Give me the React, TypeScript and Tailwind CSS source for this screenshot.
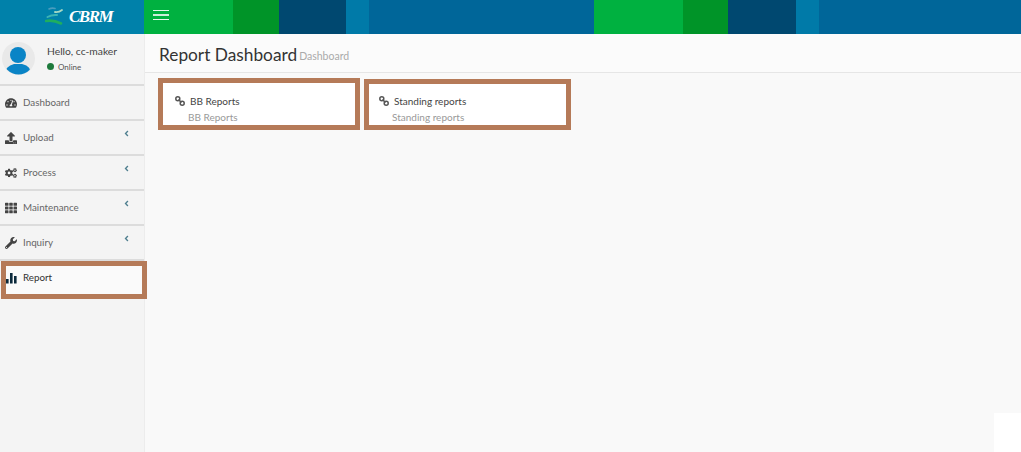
import { FaAngleLeft, FaCogs, FaTachometerAlt, FaTh, FaUpload, FaWrench } from "react-icons/fa";
import type { ReactNode } from "react";

const stripes = [
  "w-[89px] bg-[#00b140]",
  "w-[46px] bg-[#009428]",
  "w-[67px] bg-[#004870]",
  "w-[23px] bg-[#007aa8]",
  "w-[225px] bg-[#006699]",
  "w-[89px] bg-[#00b140]",
  "w-[45px] bg-[#009428]",
  "w-[68px] bg-[#004870]",
  "w-[23px] bg-[#007aa8]",
  "flex-1 bg-[#006699]",
];

const menu: { label: string; icon: ReactNode; arrow?: boolean }[] = [
  { label: "Dashboard", icon: <FaTachometerAlt /> },
  { label: "Upload", icon: <FaUpload />, arrow: true },
  { label: "Process", icon: <FaCogs />, arrow: true },
  { label: "Maintenance", icon: <FaTh />, arrow: true },
  { label: "Inquiry", icon: <FaWrench />, arrow: true },
];

function Logo() {
  return (
    <svg width="20" height="20" viewBox="0 0 20 20" fill="none" strokeLinecap="round" className="mr-[4px]">
      <path d="M4 2 Q7 0.5 10 1.5" stroke="#4a9dbf" strokeWidth="1.6" />
      <path d="M10 5 Q14 5.5 17 3" stroke="#a6d9c4" strokeWidth="1.8" />
      <path d="M2.5 10 Q7 7.5 12 8" stroke="#3cb3b5" strokeWidth="2" />
      <path d="M1 14 Q8 12.5 16 16.5" stroke="#1fae5e" strokeWidth="2.6" />
    </svg>
  );
}

function LinkIcon() {
  return (
    <svg width="10" height="10" viewBox="0 0 10 10" fill="none" stroke="#555" strokeWidth="1.5" className="shrink-0">
      <circle cx="2.8" cy="2.8" r="2" />
      <circle cx="7.2" cy="7.2" r="2" />
      <path d="M3.5 3.5 L6.5 6.5" />
    </svg>
  );
}

function ReportCard({ title, inset }: { title: string; inset: string }) {
  return (
    <div className={`relative w-full h-full bg-white ${inset}`}>
      <div className="flex items-center gap-[5px] text-[10px] leading-[14px] text-[#444]">
        <LinkIcon />
        {title}
      </div>
      <div className="pl-[13px] pt-[2px] text-[10px] leading-[15px] text-[#999]">{title}</div>
      <div className="absolute -inset-[5px] border-[5px] border-[#b57a58]" />
    </div>
  );
}

export default function App() {
  return (
    <div className="h-[452px] w-[1021px] overflow-hidden flex flex-col bg-white font-['Lato',sans-serif]">
      <header className="h-[34px] flex shrink-0">
        <div className="w-[144px] bg-[#0081aa] flex items-center pl-[45px]">
          <Logo />
          <span className="font-['Liberation_Serif',serif] italic font-bold text-[17px] text-white tracking-[-1.5px]">CBRM</span>
        </div>
        <div className="flex flex-1 relative">
          {stripes.map((s) => (
            <div key={s} className={s} />
          ))}
          <div className="absolute left-[9px] top-[10px] w-[16px] flex flex-col gap-[3px]">
            <div className="h-[1px] bg-white/90" />
            <div className="h-[2px] bg-white/80" />
            <div className="h-[1px] bg-white/90" />
          </div>
        </div>
      </header>

      <div className="flex flex-1 min-h-0">
        <aside className="w-[145px] shrink-0 bg-[#f4f4f4] border-r border-[#ececec]">
          <div className="h-[52px] flex items-center pl-[2px] border-b-2 border-[#dcdcdc]">
            <svg width="33" height="33" viewBox="0 0 33 33" className="mb-[2px]">
              <defs>
                <clipPath id="avatar-clip">
                  <circle cx="16.5" cy="16.5" r="16" />
                </clipPath>
              </defs>
              <circle cx="16.5" cy="16.5" r="16.5" fill="#e9e9e9" />
              <g clipPath="url(#avatar-clip)" fill="#0a84c6">
                <circle cx="16" cy="13" r="8" />
                <path d="M4 29 C4 25 9 23 12 22 L20 22 C24 23 28 25 28 29 C22 35 10 35 4 29 Z" />
              </g>
            </svg>
            <div className="ml-[12px] -mt-[3px]">
              <div className="text-[10.3px] leading-[14px] text-[#444]">Hello, cc-maker</div>
              <div className="mt-[4px] flex items-center gap-[4px] text-[8px] leading-[10px] text-[#555]">
                <span className="w-[7px] h-[7px] rounded-full bg-[#1e7a3c]" />
                Online
              </div>
            </div>
          </div>
          {menu.map((m) => (
            <div key={m.label} className="h-[35px] flex items-center pl-[5px] pr-[13px] border-b-2 border-[#dcdcdc] text-[#666]">
              <span className="w-[18px] text-[12px] text-[#444]">{m.icon}</span>
              <span className="text-[9.8px]">{m.label}</span>
              {m.arrow && <FaAngleLeft className="ml-auto mb-[8px] text-[9px] text-[#4f7f8f]" />}
            </div>
          ))}
          <div className="relative mt-[5px] ml-[6px] mr-[2px] h-[28px] bg-[#fafafa] flex items-center pb-[5px] text-[9.8px] text-[#333]">
            <svg width="12" height="12" viewBox="0 0 12 12" className="mr-[5px]">
              <rect x="0" y="7" width="2.6" height="4.5" fill="#0b2a3c" />
              <rect x="4" y="1" width="2.6" height="10.5" fill="#0b2a3c" />
              <rect x="8" y="4" width="2.6" height="7.5" fill="#0b2a3c" />
            </svg>
            Report
            <div className="absolute -inset-[5px] border-[5px] border-[#b57a58]" />
          </div>
        </aside>

        <main className="flex-1 flex flex-col min-w-0">
          <div className="flex-1 bg-[#f9f9f9]">
            <div className="h-[39px] pl-[14px] pt-[3px] flex items-center bg-[#fbfbfb] border-b border-[#e6e6e6]">
              <span className="text-[17.3px] text-[#333]">Report Dashboard</span>
              <span className="ml-[2px] mt-[5px] text-[10.5px] text-[#aaa]">Dashboard</span>
            </div>
            <div className="flex pt-[10px] pl-[18px] gap-[14px]">
              <div className="w-[192px] h-[42px]">
                <ReportCard title="BB Reports" inset="pl-[12px] pt-[11px]" />
              </div>
              <div className="w-[197px] h-[41px] mt-[1px]">
                <ReportCard title="Standing reports" inset="pl-[10px] pt-[10px]" />
              </div>
            </div>
          </div>
          <div className="h-[39px] flex shrink-0">
            <div className="w-[849px] bg-[#f9f9f9]" />
          </div>
        </main>
      </div>
    </div>
  );
}
